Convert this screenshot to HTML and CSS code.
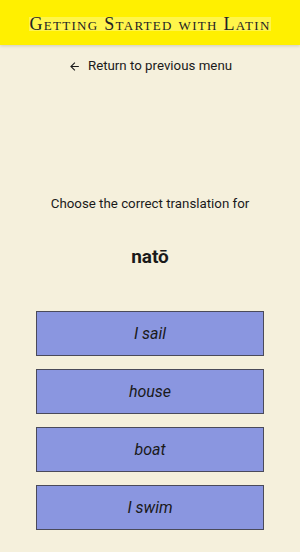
FILE: index.html
```html
<!DOCTYPE html>
<html lang="en">
<head>
    <meta charset="UTF-8">
    <meta name="viewport" content="width=device-width, initial-scale=1.0">
    <title>Getting Started with Latin</title>
    <link rel="stylesheet" href="styles.css">
</head>
<body>
    <header class="header">
        <h1 class="title">Getting Started with Latin</h1>
    </header>

    <main class="quiz">
        <a class="back-link" href="#">
            <svg class="back-icon" viewBox="0 0 24 24" width="13" height="13">
                <path d="M20 11H7.83l5.59-5.59L12 4l-8 8 8 8 1.41-1.41L7.83 13H20v-2z"/>
            </svg>
            <span>Return to previous menu</span>
        </a>

        <p class="prompt">Choose the correct translation for</p>
        <p class="word">natō</p>

        <div class="answers">
            <button class="answer">I sail</button>
            <button class="answer">house</button>
            <button class="answer">boat</button>
            <button class="answer">I swim</button>
        </div>
    </main>
</body>
</html>
```

FILE: styles.css
```css
* {
    margin: 0;
    padding: 0;
    box-sizing: border-box;
}

body {
    min-height: 100vh;
    background: #f5f0dc;
    font-family: Roboto, 'Noto Sans', sans-serif;
    color: #1a1a1a;
}

.header {
    height: 45px;
    background: #fff000;
    display: flex;
    justify-content: center;
    align-items: center;
    box-shadow: 0 1px 3px rgba(0, 0, 0, 0.15);
}

.title {
    font-family: 'Liberation Serif', serif;
    font-variant: small-caps;
    font-weight: normal;
    font-size: 18px;
    letter-spacing: 1.3px;
    color: #222;
    background: #fff54a;
    line-height: 14px;
    margin-top: 2px;
}

.quiz {
    display: flex;
    flex-direction: column;
    align-items: center;
}

.back-link {
    margin-top: 13px;
    display: flex;
    align-items: center;
    gap: 7px;
    color: #1a1a1a;
    text-decoration: none;
    font-size: 13.3px;
    line-height: 16px;
}

.back-icon {
    fill: #1a1a1a;
}

.prompt {
    margin-top: 122px;
    font-size: 13.3px;
    line-height: 16px;
}

.word {
    margin-top: 33px;
    font-size: 19px;
    font-weight: bold;
    line-height: 24px;
}

.answers {
    margin-top: 42px;
    width: 228px;
    display: flex;
    flex-direction: column;
    gap: 13px;
}

.answer {
    height: 45px;
    background: #8a96e0;
    border: 1px solid #4a4a5a;
    font-family: Roboto, 'Noto Sans', sans-serif;
    font-style: italic;
    font-size: 16px;
    color: #1a1a1a;
    cursor: pointer;
}
```
